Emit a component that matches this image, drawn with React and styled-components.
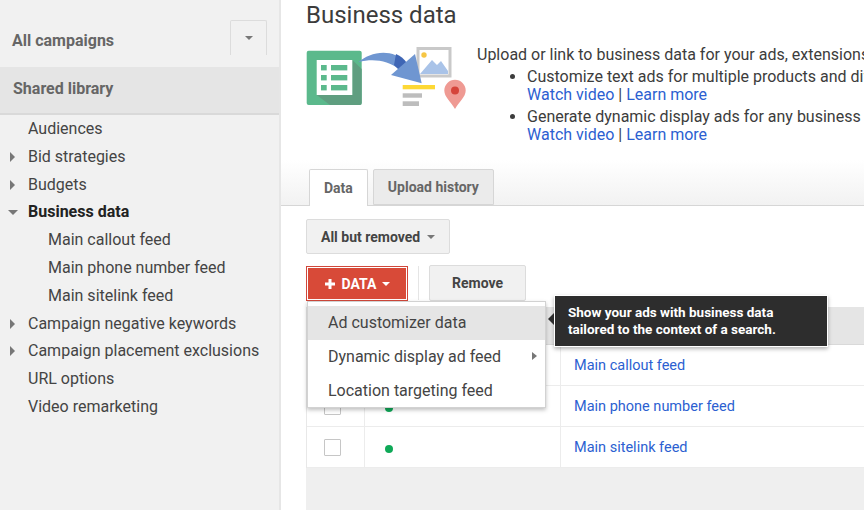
import React from "react";
import styled, { createGlobalStyle } from "styled-components";

const Global = createGlobalStyle`
  html, body { margin: 0; padding: 0; background: #fff; }
  body { font-family: Roboto, "Liberation Sans", Arial, sans-serif; color: #3c3c3c; }
  * { box-sizing: border-box; }
`;

const Page = styled.div`
  display: flex;
  width: 864px;
  height: 510px;
  overflow: hidden;
`;

const Sidebar = styled.aside`
  flex: 0 0 281px;
  height: 100%;
  background: #f1f1f1;
  border-right: 2px solid #e6e6e6;
`;

const CampaignRow = styled.div`
  display: flex;
  align-items: center;
  justify-content: space-between;
  height: 67px;
  padding: 13px 12px 0 12px;
`;

const CampaignTitle = styled.span`
  font-size: 16px;
  font-weight: 700;
  color: #666;
`;

const SideDrop = styled.div`
  display: flex;
  align-items: center;
  justify-content: center;
  width: 37px;
  height: 35px;
  margin-top: -5px;
  border: 1px solid #dcdcdc;
  border-bottom: none;
  border-radius: 2px 2px 0 0;
`;

const Caret = styled.span`
  display: inline-block;
  width: 0;
  height: 0;
  border-left: 4px solid transparent;
  border-right: 4px solid transparent;
  border-top: 4px solid ${(p) => p.$color || "#777"};
`;

const Arrow = styled.span`
  position: absolute;
  left: 10px;
  top: ${(p) => (p.$open ? "12px" : "9px")};
  width: 0;
  height: 0;
  ${(p) =>
    p.$open
      ? `border-left: 5px solid transparent; border-right: 5px solid transparent; border-top: 5px solid #777; left: 8px;`
      : `border-top: 5px solid transparent; border-bottom: 5px solid transparent; border-left: 5px solid #777;`}
`;

const LibraryHead = styled.div`
  display: flex;
  align-items: center;
  height: 48px;
  padding: 0 13px 3px;
  background: #e5e5e5;
  border-bottom: 2px solid #d9d9d9;
  font-size: 16px;
  font-weight: 700;
  color: #666;
`;

const Tree = styled.ul`
  list-style: none;
  margin: 0;
  padding: 0;
`;

const TreeItem = styled.li`
  position: relative;
  height: 27.8px;
  line-height: 27.8px;
  padding-left: ${(p) => (p.$child ? "48px" : "28px")};
  font-size: 16px;
  white-space: nowrap;
  font-weight: ${(p) => (p.$active ? 700 : 400)};
  color: ${(p) => (p.$active ? "#222" : "#444")};
`;

const Main = styled.main`
  flex: 1;
  min-width: 0;
  height: 100%;
  overflow: hidden;
`;

const Title = styled.h1`
  margin: 0;
  padding-left: 25px;
  height: 45px;
  font-size: 24px;
  line-height: 30px;
  font-weight: 400;
  color: #3c3c3c;
`;

const Intro = styled.section`
  display: flex;
  gap: 11px;
  height: 115px;
  padding-left: 25px;
  font-size: 16px;
  white-space: nowrap;
`;

const IntroText = styled.div`
  padding-top: 1px;
  line-height: 18px;
  color: #3c3c3c;
`;

const Bullets = styled.ul`
  margin: 4px 0 0;
  padding: 0 0 0 50px;
`;

const Bullet = styled.li`
  margin-bottom: 4px;
  line-height: 18px;
`;

const Link = styled.a`
  color: #2c5fd1;
  text-decoration: none;
`;

const TabBar = styled.div`
  display: flex;
  align-items: flex-end;
  gap: 5px;
  height: 46px;
  padding-left: 28px;
  background: linear-gradient(#fff, #f2f2f2);
  border-bottom: 1px solid #d6d6d6;
`;

const Tab = styled.div`
  display: flex;
  align-items: center;
  justify-content: center;
  height: ${(p) => (p.$active ? "37px" : "36px")};
  margin-bottom: ${(p) => (p.$active ? "-1px" : "0")};
  padding: 0 14px;
  font-size: 14px;
  font-weight: 700;
  color: #666;
  background: ${(p) => (p.$active ? "#fff" : "#ebebeb")};
  border: 1px solid #d6d6d6;
  border-bottom: ${(p) => (p.$active ? "none" : "1px solid #d6d6d6")};
  border-radius: 2px 2px 0 0;
`;

const FilterRow = styled.div`
  padding: 13px 0 12px 25px;
`;

const GreyButton = styled.button`
  display: inline-flex;
  align-items: center;
  justify-content: center;
  gap: 7px;
  height: 35px;
  padding: 0 14px;
  font-family: inherit;
  font-size: 14px;
  font-weight: 700;
  color: #444;
  background: #f1f1f1;
  border: 1px solid #dcdcdc;
  border-radius: 2px;
`;

const Workspace = styled.div`
  position: relative;
  padding-left: 25px;
`;

const Actions = styled.div`
  display: flex;
  align-items: flex-start;
  height: 41px;
`;

const RedOutline = styled.div`
  width: 102px;
  height: 35px;
  padding: 1px;
  border: 1px solid #d0473a;
  background: #fff;
`;

const RedButton = styled.button`
  display: flex;
  align-items: center;
  justify-content: center;
  gap: 6px;
  width: 100%;
  height: 100%;
  padding: 0;
  font-family: inherit;
  font-size: 14px;
  font-weight: 700;
  color: #fff;
  background: #d84a38;
  border: none;
`;

const Divider = styled.div`
  width: 1px;
  height: 34px;
  margin: 0 10px;
  background: #e5e5e5;
`;

const RemoveButton = styled(GreyButton)`
  width: 97px;
  height: 36px;
  margin-top: -1px;
`;

const Table = styled.div`
  border-left: 1px solid #e8e8e8;
`;

const HeadRow = styled.div`
  height: 38px;
  background: #e5e5e5;
  border-bottom: 1px solid #d9d9d9;
`;

const Row = styled.div`
  display: grid;
  grid-template-columns: 58px 196px 1fr;
  height: 41px;
  border-bottom: 1px solid #ececec;
`;

const Cell = styled.div`
  display: flex;
  align-items: center;
  padding-left: ${(p) => p.$pad || 0}px;
  border-right: ${(p) => (p.$last ? "none" : "1px solid #ececec")};
  font-size: 14.5px;
`;

const Check = styled.span`
  width: 17px;
  height: 17px;
  background: #fff;
  border: 1px solid #c6c6c6;
  border-radius: 1px;
`;

const Dot = styled.span`
  width: 8px;
  height: 8px;
  margin-top: 4px;
  border-radius: 50%;
  background: #0fa958;
`;

const Footer = styled.div`
  height: 60px;
  background: #efefef;
`;

const Menu = styled.div`
  position: absolute;
  left: 26px;
  top: 35px;
  width: 239px;
  height: 107px;
  padding-top: 4px;
  background: #fff;
  border: 1px solid #d2d2d2;
  box-shadow: 0 2px 4px rgba(0, 0, 0, 0.25);
`;

const MenuItem = styled.div`
  position: relative;
  height: 34px;
  line-height: 34px;
  padding-left: 20px;
  font-size: 16px;
  color: #444;
  background: ${(p) => (p.$hover ? "#e5e5e5" : "transparent")};
`;

const SubArrow = styled.span`
  position: absolute;
  right: 8px;
  top: 12px;
  width: 0;
  height: 0;
  border-top: 4px solid transparent;
  border-bottom: 4px solid transparent;
  border-left: 5px solid #777;
`;

const Tooltip = styled.div`
  position: absolute;
  left: 273px;
  top: 29px;
  width: 274px;
  height: 52px;
  padding: 8px 0 0 13px;
  background: #2d2d2d;
  border: 1px solid #fff;
  box-shadow: 0 2px 4px rgba(0, 0, 0, 0.3);
  color: #fff;
  font-size: 13.5px;
  font-weight: 700;
  line-height: 17px;
  &::before {
    content: "";
    position: absolute;
    left: -7px;
    top: 17px;
    border-top: 6px solid transparent;
    border-bottom: 6px solid transparent;
    border-right: 6px solid #2d2d2d;
  }
`;

const Illustration = () => (
  <svg width="160" height="70" viewBox="0 0 160 70" style={{ flex: "0 0 160px" }}>
    <rect x="0.7" y="5.7" width="55" height="54.3" rx="2" fill="#5bb98c" />
    <path d="M46.3 15 L55.7 24 V58 a2 2 0 0 1 -2 2 H24 L10.7 50 H46.3 Z" fill="#5f9e80" />
    <rect x="10.7" y="15" width="35.6" height="35" fill="#fff" />
    {[20, 30, 40].map((y) => (
      <g key={y} fill="#5bb98c">
        <rect x="15" y={y} width="5.7" height="5.4" />
        <rect x="25" y={y} width="16.3" height="5.4" />
      </g>
    ))}
    <path d="M52.3 17.3 C64 7 86 2 101 18.3 L93 24 C82 16 68 13 52.3 17.3 Z" fill="#6f96d1" />
    <path d="M90 9 C95 11 98 14 101 18.3 L94 26 L88 20 Z" fill="#3f66b5" />
    <rect x="112" y="3.5" width="32" height="27.5" fill="#fff" stroke="#c9c9c9" stroke-width="3" />
    <circle cx="118" cy="10" r="2.7" fill="#f6c644" />
    <path d="M114 29 L126 15 L131 20 L135 16 L142 26 V29 Z" fill="#a9c3e8" />
    <path d="M109 9 L115.7 38.3 L85 30 Z" fill="#6f96d1" />
    <rect x="96.7" y="40" width="32.3" height="4.3" fill="#fdd835" />
    <rect x="96.7" y="48.3" width="19.3" height="4.4" fill="#bdbdbd" />
    <rect x="96.7" y="56.3" width="16.3" height="4.7" fill="#bdbdbd" />
    <path d="M149 64 C145 57 138.3 52 138.3 45.5 a10.7 10.7 0 0 1 21.4 0 C159.7 52 153 57 149 64 Z" fill="#ef9a93" />
    <circle cx="149" cy="45.5" r="4" fill="#d5443a" />
  </svg>
);

const PlusIcon = () => (
  <svg width="12" height="12" viewBox="0 0 12 12">
    <path d="M4.5 1h3v3.5H11v3H7.5V11h-3V7.5H1v-3h3.5z" fill="#fff" />
  </svg>
);

const children = ["Main callout feed", "Main phone number feed", "Main sitelink feed"];

export default function App() {
  return (
    <Page>
      <Global />
      <Sidebar>
        <CampaignRow>
          <CampaignTitle>All campaigns</CampaignTitle>
          <SideDrop><Caret /></SideDrop>
        </CampaignRow>
        <LibraryHead>Shared library</LibraryHead>
        <Tree>
          <TreeItem>Audiences</TreeItem>
          <TreeItem><Arrow />Bid strategies</TreeItem>
          <TreeItem><Arrow />Budgets</TreeItem>
          <TreeItem $active><Arrow $open />Business data</TreeItem>
          {children.map((c) => <TreeItem $child key={c}>{c}</TreeItem>)}
          <TreeItem><Arrow />Campaign negative keywords</TreeItem>
          <TreeItem><Arrow />Campaign placement exclusions</TreeItem>
          <TreeItem>URL options</TreeItem>
          <TreeItem>Video remarketing</TreeItem>
        </Tree>
      </Sidebar>
      <Main>
        <Title>Business data</Title>
        <Intro>
          <Illustration />
          <IntroText>
            Upload or link to business data for your ads, extensions and more.
            <Bullets>
              <Bullet>
                Customize text ads for multiple products and different audiences
                <br />
                <Link>Watch video</Link> | <Link>Learn more</Link>
              </Bullet>
              <Bullet>
                Generate dynamic display ads for any business type
                <br />
                <Link>Watch video</Link> | <Link>Learn more</Link>
              </Bullet>
            </Bullets>
          </IntroText>
        </Intro>
        <TabBar>
          <Tab $active>Data</Tab>
          <Tab>Upload history</Tab>
        </TabBar>
        <FilterRow>
          <GreyButton>All but removed <Caret /></GreyButton>
        </FilterRow>
        <Workspace>
          <Actions>
            <RedOutline>
              <RedButton><PlusIcon /> DATA <Caret $color="#fff" /></RedButton>
            </RedOutline>
            <Divider />
            <RemoveButton>Remove</RemoveButton>
          </Actions>
          <Table>
            <HeadRow />
            {children.map((c) => (
              <Row key={c}>
                <Cell $pad={17}><Check /></Cell>
                <Cell $pad={20}><Dot /></Cell>
                <Cell $pad={13} $last><Link>{c}</Link></Cell>
              </Row>
            ))}
          </Table>
          <Footer />
          <Menu>
            <MenuItem $hover>Ad customizer data</MenuItem>
            <MenuItem>Dynamic display ad feed<SubArrow /></MenuItem>
            <MenuItem>Location targeting feed</MenuItem>
          </Menu>
          <Tooltip>
            Show your ads with business data
            <br />
            tailored to the context of a search.
          </Tooltip>
        </Workspace>
      </Main>
    </Page>
  );
}
